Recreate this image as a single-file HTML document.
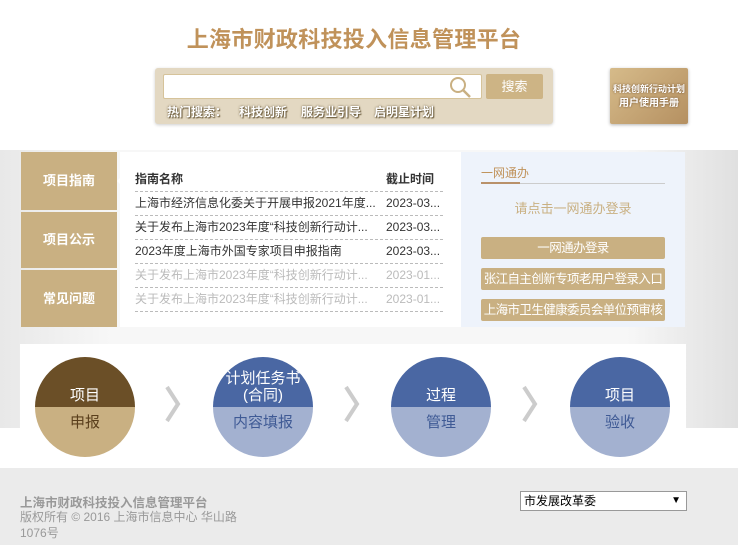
<!DOCTYPE html>
<html><head><meta charset="utf-8"><style>
*{margin:0;padding:0;box-sizing:border-box}
body{width:738px;height:545px;overflow:hidden;background:#fff;font-family:"Liberation Sans","Noto Sans CJK SC",sans-serif;position:relative;font-size:12px}
.abs{position:absolute}
.title{left:0;width:708px;top:22px;text-align:center;font-size:22px;font-weight:bold;color:#c0925a;letter-spacing:0.3px}
.sp{left:155px;top:68px;width:398px;height:56px;background:#e3d8c2;border-radius:3px;box-shadow:0 1px 3px rgba(0,0,0,.2)}
.inp{left:163px;top:74px;width:319px;height:25px;background:#fff;border:1px solid #d6c39a;border-radius:2px}
.btn{left:486px;top:74px;width:57px;height:25px;background:#cdb485;color:#fff;text-align:center;line-height:25px;font-size:13px;border-radius:2px}
.hot{top:103px;font-size:12px;color:#fff;text-shadow:0 0 2px #6a5a3a,1px 1px 1px #6a5a3a;font-weight:bold}
.man{left:610px;top:68px;width:78px;height:56px;background:linear-gradient(135deg,#d6bb8a,#b59061);color:#fff;text-align:center;font-size:9px;line-height:14px;padding-top:14px;box-shadow:0 1px 3px rgba(0,0,0,.3);border-radius:2px;text-shadow:0 0 2px #6a4a2a;font-weight:bold}
.band{left:0;top:150px;width:738px;height:278px;background:linear-gradient(90deg,#e8e8e8,#f7f7f7 15%,#f7f7f7 85%,#e0e0e0)}
.tab{left:21px;width:96px;background:#c9b082;color:#fff;font-weight:bold;font-size:13px;text-align:center}
.tbl{left:120px;top:152px;width:341px;height:175px;background:#fff}
.row{position:absolute;left:15px;width:308px;height:24px;line-height:23px;border-bottom:1px dashed #bbb;font-size:12px;color:#333;white-space:nowrap;overflow:hidden}
.row span{position:absolute;left:249px;background:#fff;padding-left:2px}
.rp{left:461px;top:152px;width:224px;height:175px;background:#eef3fb}
.gb{position:absolute;left:20px;width:184px;height:22px;background:#c9b082;color:#fff;text-align:center;line-height:22px;font-size:12.5px;border-radius:2px;white-space:nowrap;overflow:hidden;letter-spacing:-0.6px}
.steps{left:20px;top:344px;width:666px;height:84px;background:#fff}
.c{position:absolute;top:357px;width:100px;height:100px;border-radius:50%;overflow:hidden;text-align:center;font-size:15px}
.c .t{height:50px;display:flex;align-items:flex-end;justify-content:center;padding-bottom:3px;color:#fff;line-height:17px}
.c .b{height:50px;padding-top:4px}
.chev{position:absolute;top:385px;width:16px;height:38px}
.foot{left:0;top:468px;width:738px;height:77px;background:#ebebeb}
</style></head><body>
<div class="abs title">上海市财政科技投入信息管理平台</div>
<div class="abs sp"></div>
<div class="abs inp"></div>
<svg class="abs" style="left:449px;top:76px" width="24" height="22"><circle cx="9" cy="9" r="7" fill="none" stroke="#c9b082" stroke-width="2"/><line x1="14" y1="14" x2="21" y2="21" stroke="#c9b082" stroke-width="2.5"/></svg>
<div class="abs btn">搜索</div>
<div class="abs hot" style="left:167px">热门搜索：</div>
<div class="abs hot" style="left:239px">科技创新</div>
<div class="abs hot" style="left:301px">服务业引导</div>
<div class="abs hot" style="left:374px">启明星计划</div>
<div class="abs man">科技创新行动计划<br><span style="font-size:10px">用户使用手册</span></div>
<div class="abs band"></div>
<div class="abs tab" style="top:152px;height:58px;line-height:58px">项目指南</div>
<div class="abs tab" style="top:212px;height:56px;line-height:56px">项目公示</div>
<div class="abs tab" style="top:270px;height:57px;line-height:57px">常见问题</div>
<div class="abs tbl">
<div class="row" style="top:16px;font-weight:bold">指南名称<span>截止时间</span></div>
<div class="row" style="top:40px">上海市经济信息化委关于开展申报2021年度...<span>2023-03...</span></div>
<div class="row" style="top:64px">关于发布上海市2023年度“科技创新行动计...<span>2023-03...</span></div>
<div class="row" style="top:88px">2023年度上海市外国专家项目申报指南<span>2023-03...</span></div>
<div class="row" style="top:112px;color:#bbb">关于发布上海市2023年度“科技创新行动计...<span>2023-01...</span></div>
<div class="row" style="top:136px;color:#bbb">关于发布上海市2023年度“科技创新行动计...<span>2023-01...</span></div>
</div>
<div class="abs" style="left:112px;top:176px;width:0;height:0;border:5px solid transparent;border-right-color:#fff"></div>
<div class="abs rp">
<div style="position:absolute;left:20px;top:12px;color:#c0925a;font-size:12px">一网通办</div>
<div style="position:absolute;left:20px;top:31px;width:184px;height:1px;background:#ccc"></div>
<div style="position:absolute;left:20px;top:30px;width:39px;height:2px;background:#b9916a"></div>
<div style="position:absolute;left:0;width:224px;top:46px;text-align:center;color:#c9b082;font-size:13px">请点击一网通办登录</div>
<div class="gb" style="top:85px">一网通办登录</div>
<div class="gb" style="top:116px">张江自主创新专项老用户登录入口</div>
<div class="gb" style="top:147px">上海市卫生健康委员会单位预审核</div>
</div>
<div class="abs steps"></div>
<div class="c" style="left:35px"><div class="t" style="background:#6b4f27">项目</div><div class="b" style="background:#c9b082;color:#5a3f1c">申报</div></div>
<div class="c" style="left:213px"><div class="t" style="background:#4a67a3">计划任务书<br>(合同)</div><div class="b" style="background:#a3b1d0;color:#3f5a95">内容填报</div></div>
<div class="c" style="left:391px"><div class="t" style="background:#4a67a3">过程</div><div class="b" style="background:#a3b1d0;color:#3f5a95">管理</div></div>
<div class="c" style="left:570px"><div class="t" style="background:#4a67a3">项目</div><div class="b" style="background:#a3b1d0;color:#3f5a95">验收</div></div>
<svg class="chev" style="left:165px" viewBox="0 0 16 38"><path d="M2 2 L13 19 L2 36" fill="none" stroke="#ccc" stroke-width="4"/></svg>
<svg class="chev" style="left:344px" viewBox="0 0 16 38"><path d="M2 2 L13 19 L2 36" fill="none" stroke="#ccc" stroke-width="4"/></svg>
<svg class="chev" style="left:522px" viewBox="0 0 16 38"><path d="M2 2 L13 19 L2 36" fill="none" stroke="#ccc" stroke-width="4"/></svg>
<div class="abs foot">
<div style="position:absolute;left:20px;top:24px;color:#999;font-size:12.5px;font-weight:bold">上海市财政科技投入信息管理平台</div>
<div style="position:absolute;left:20px;top:41px;color:#999;font-size:12px;line-height:16px">版权所有 © 2016 上海市信息中心 华山路<br>1076号</div>
<div style="position:absolute;left:520px;top:23px;width:167px;height:20px;background:#fff;border:1px solid #999;font-size:12px;line-height:18px;padding-left:3px">市发展改革委<span style="position:absolute;right:5px;font-size:10px">▼</span></div>
</div>
</body></html>
